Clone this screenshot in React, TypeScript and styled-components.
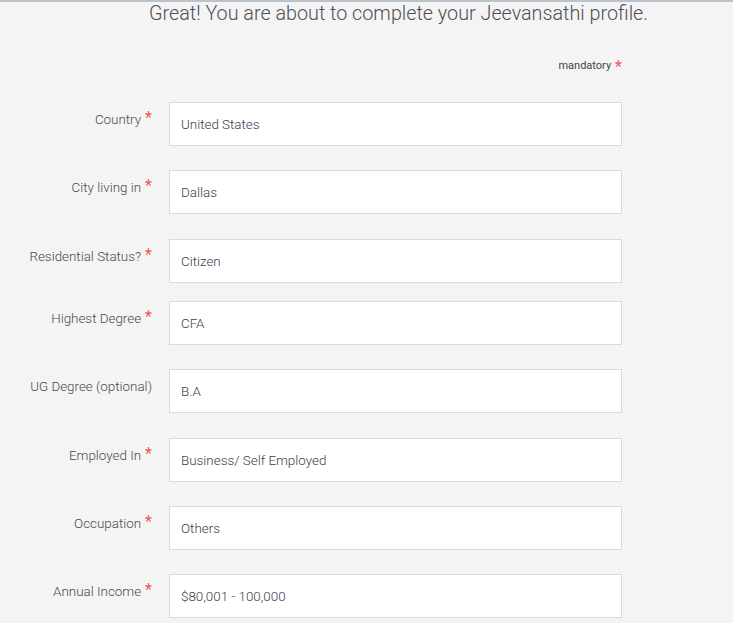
import React from 'react';
import styled, { createGlobalStyle } from 'styled-components';

interface IField {
  label: string;
  value: string;
  required: boolean;
  space: number;
}

const fields: IField[] = [
  { label: 'Country', value: 'United States', required: true, space: 24 },
  { label: 'City living in', value: 'Dallas', required: true, space: 25 },
  { label: 'Residential Status?', value: 'Citizen', required: true, space: 18 },
  { label: 'Highest Degree', value: 'CFA', required: true, space: 24 },
  { label: 'UG Degree (optional)', value: 'B.A', required: false, space: 25 },
  { label: 'Employed In', value: 'Business/ Self Employed', required: true, space: 24 },
  { label: 'Occupation', value: 'Others', required: true, space: 24 },
  { label: 'Annual Income', value: '$80,001 - 100,000', required: true, space: 24 },
];

const GlobalStyle = createGlobalStyle`
  body {
    margin: 0;
    background-color: #f4f4f4;
    border-top: 2px solid #b9c3cd;
    font-family: Roboto, 'Liberation Sans', sans-serif;
    color: #555555;
  }
`;

const Page = styled.div`
  width: 622px;
`;

const Heading = styled.h1`
  margin: 0;
  padding-left: 149px;
  font-size: 19.75px;
  line-height: 24px;
  font-weight: 300;
  color: #4f4f55;
  white-space: nowrap;
`;

const Mandatory = styled.div`
  margin-top: 33px;
  text-align: right;
  font-size: 11px;
  line-height: 14px;
  color: #444444;
`;

const Star = styled.span<{ $size: number }>`
  color: #f2545b;
  font-size: ${(p) => p.$size}px;
  font-weight: 400;
  line-height: 1;
  margin-left: 4px;
  vertical-align: top;
`;

const Form = styled.div`
  margin-top: 27px;
`;

const Row = styled.div<{ $space: number }>`
  display: grid;
  grid-template-columns: 152px 453px;
  column-gap: 17px;
  margin-bottom: ${(p) => p.$space}px;
`;

const Label = styled.div`
  text-align: right;
  padding-top: 8px;
  font-size: 13.4px;
  line-height: 20px;
  font-weight: 300;
  color: #4a4a4a;
  white-space: nowrap;
`;

const Control = styled.div`
  height: 44px;
  box-sizing: border-box;
  border: 1px solid #dadada;
  background-color: #ffffff;
  padding: 0 11px;
  display: flex;
  align-items: center;
  font-size: 13.4px;
  font-weight: 300;
  color: #3c3c4e;
`;

export default function App() {
  return (
    <Page>
      <GlobalStyle />
      <Heading>Great! You are about to complete your Jeevansathi profile.</Heading>
      <Mandatory>
        mandatory<Star $size={16}>*</Star>
      </Mandatory>
      <Form>
        {fields.map((f) => (
          <Row key={f.label} $space={f.space}>
            <Label>
              {f.label}
              {f.required && <Star $size={16}>*</Star>}
            </Label>
            <Control>{f.value}</Control>
          </Row>
        ))}
      </Form>
    </Page>
  );
}
